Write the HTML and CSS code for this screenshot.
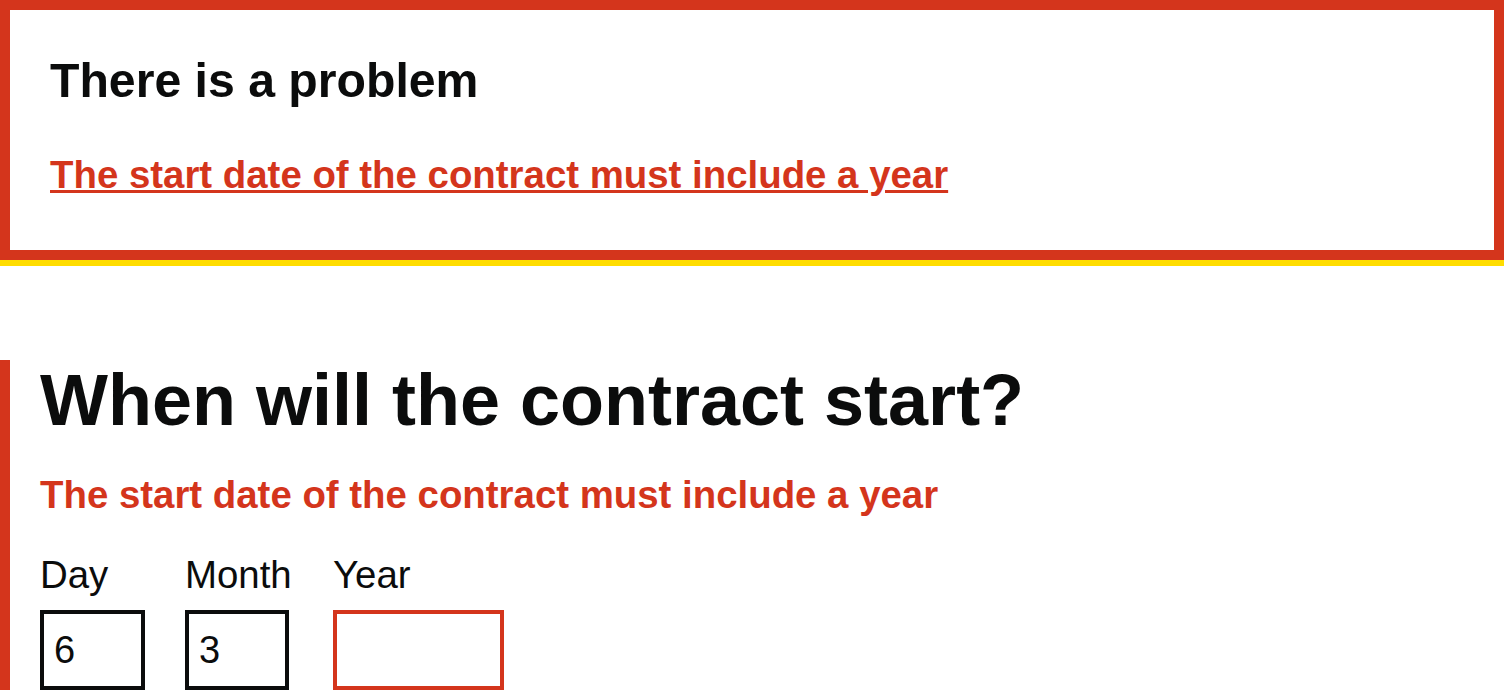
FILE: index.html
```html
<!DOCTYPE html>
<html lang="en">
<head>
<meta charset="utf-8">
<title>When will the contract start?</title>
<link rel="stylesheet" href="styles.css">
</head>
<body>
<div class="error-summary" role="alert" tabindex="-1">
  <h2 class="error-summary__title">There is a problem</h2>
  <div class="error-summary__body">
    <ul class="error-summary__list">
      <li><a href="#start-date-year">The start date of the contract must include a year</a></li>
    </ul>
  </div>
</div>
<div class="form-group form-group--error">
  <fieldset class="fieldset" role="group">
    <legend class="fieldset__legend">
      <h1 class="fieldset__heading">When will the contract start?</h1>
    </legend>
    <p class="error-message">The start date of the contract must include a year</p>
    <div class="date-input">
      <div class="date-input__item">
        <label class="label" for="start-date-day">Day</label>
        <input class="input input--day" id="start-date-day" type="text" inputmode="numeric" value="6">
      </div>
      <div class="date-input__item date-input__item--month">
        <label class="label" for="start-date-month">Month</label>
        <input class="input input--month" id="start-date-month" type="text" inputmode="numeric" value="3">
      </div>
      <div class="date-input__item">
        <label class="label" for="start-date-year">Year</label>
        <input class="input input--year input--error" id="start-date-year" type="text" inputmode="numeric" value="">
      </div>
    </div>
  </fieldset>
</div>
</body>
</html>
```
FILE: styles.css
```css
html, body {
  margin: 0;
  padding: 0;
  background: #ffffff;
}
body {
  font-family: "Liberation Sans", Arial, sans-serif;
  color: #0b0c0c;
  overflow: hidden;
}
.error-summary {
  border: 10px solid #d4351c;
  padding: 40px;
  margin-bottom: 100px;
  box-shadow: 0 6px 0 0 #ffdd00;
  outline: none;
}
.error-summary__title {
  margin: 0 0 40px;
  font-size: 48.2px;
  line-height: 60px;
  font-weight: 700;
}
.error-summary__list {
  list-style: none;
  margin: 0;
  padding: 0;
}
.error-summary__list li {
  margin-bottom: 10px;
  font-size: 38.4px;
  line-height: 50px;
  font-weight: 700;
}
.error-summary__list a {
  color: #d4351c;
  text-decoration: underline;
  text-decoration-thickness: 3px;
  text-underline-offset: 2px;
}
.form-group--error {
  border-left: 10px solid #d4351c;
  padding-left: 30px;
}
.fieldset {
  margin: 0;
  padding: 0;
  border: 0;
  min-width: 0;
}
.fieldset__legend {
  padding: 0;
  margin: 0 0 30px;
}
.fieldset__heading {
  margin: 0;
  font-size: 72px;
  line-height: 80px;
  font-weight: 700;
}
.error-message {
  margin: 0 0 30px;
  color: #d4351c;
  font-size: 38.4px;
  line-height: 50px;
  font-weight: 700;
}
.date-input {
  display: flex;
  gap: 40px;
}
.date-input__item {
  display: flex;
  flex-direction: column;
  align-items: flex-start;
}
.date-input__item--month {
  min-width: 108px;
}
.label {
  display: block;
  margin-bottom: 10px;
  font-size: 38.4px;
  line-height: 50px;
}
.input {
  box-sizing: border-box;
  height: 80px;
  margin: 0;
  padding: 10px;
  border: 4px solid #0b0c0c;
  border-radius: 0;
  font-family: "Liberation Sans", Arial, sans-serif;
  font-size: 38px;
  line-height: 50px;
  color: #0b0c0c;
  background: #ffffff;
  outline: none;
}
.input--day {
  width: 105px;
}
.input--month {
  width: 104px;
}
.input--year {
  width: 171px;
}
.input--error {
  border-color: #d4351c;
}
```
